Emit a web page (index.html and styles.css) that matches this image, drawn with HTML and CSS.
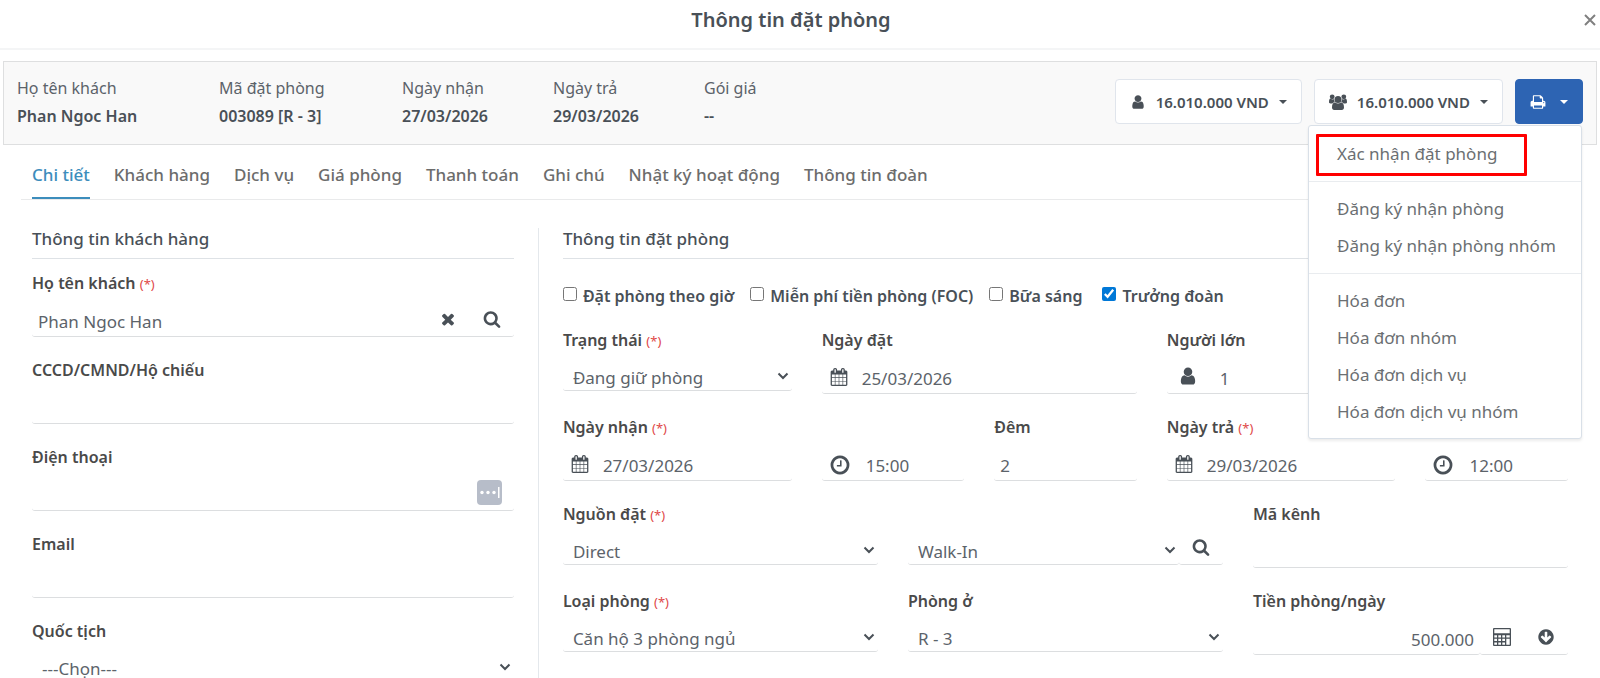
FILE: index.html
```html
<!DOCTYPE html>
<html lang="vi">
<head>
<meta charset="utf-8">
<title>Thông tin đặt phòng</title>
<link rel="stylesheet" href="styles.css">
</head>
<body>
<svg class="sprite" aria-hidden="true">
  <symbol id="i-search" viewBox="0 0 1792 1792"><path d="M1216 832q0-185-131.500-316.500t-316.500-131.500-316.500 131.500-131.500 316.500 131.500 316.500 316.500 131.500 316.500-131.500 131.500-316.500zm512 832q0 52-38 90t-90 38q-54 0-90-38l-343-342q-179 124-399 124-143 0-273.500-55.500t-225-150-150-225-55.500-273.500 55.500-273.500 150-225 225-150 273.500-55.500 273.500 55.500 225 150 150 225 55.500 273.500q0 220-124 399l343 343q37 37 37 90z"/></symbol>
  <symbol id="i-user" viewBox="0 0 1792 1792"><path d="M1536 1399q0 109-62.500 187t-150.500 78h-854q-88 0-150.500-78t-62.500-187q0-85 8.500-160.500t31.500-152 58.500-131 94-89 134.500-34.500q131 128 313 128t313-128q76 0 134.500 34.500t94 89 58.500 131 31.500 152 8.500 160.500zm-256-887q0 159-112.500 271.500t-271.500 112.500-271.500-112.500-112.500-271.500 112.500-271.500 271.500-112.500 271.500 112.500 112.500 271.500z"/></symbol>
  <symbol id="i-times" viewBox="0 0 1792 1792"><path d="M1490 1322q0 40-28 68l-136 136q-28 28-68 28t-68-28l-294-294-294 294q-28 28-68 28t-68-28l-136-136q-28-28-28-68t28-68l294-294-294-294q-28-28-28-68t28-68l136-136q28-28 68-28t68 28l294 294 294-294q28-28 68-28t68 28l136 136q28 28 28 68t-28 68l-294 294 294 294q28 28 28 68z"/></symbol>
  <symbol id="i-clock" viewBox="0 0 1792 1792"><path d="M1024 544v448q0 14-9 23t-23 9h-320q-14 0-23-9t-9-23v-64q0-14 9-23t23-9h224v-352q0-14 9-23t23-9h64q14 0 23 9t9 23zm416 352q0-148-73-273t-198-198-273-73-273 73-198 198-73 273 73 273 198 198 273 73 273-73 198-198 73-273zm224 0q0 209-103 385.500t-279.500 279.500-385.500 103-385.500-103-279.500-279.500-103-385.500 103-385.500 279.500-279.500 385.500-103 385.500 103 279.500 279.500 103 385.500z"/></symbol>
  <symbol id="i-calendar" viewBox="0 0 1792 1792"><path d="M192 1664h288v-288h-288v288zm352 0h320v-288h-320v288zm-352-352h288v-320h-288v320zm352 0h320v-320h-320v320zm-352-384h288v-288h-288v288zm736 736h320v-288h-320v288zm-384-736h320v-288h-320v288zm768 736h288v-288h-288v288zm-384-352h320v-320h-320v320zm-352-864v-288q0-13-9.500-22.500t-22.500-9.500h-64q-13 0-22.500 9.500t-9.500 22.500v288q0 13 9.500 22.500t22.500 9.500h64q13 0 22.500-9.500t9.500-22.500zm736 864h288v-320h-288v320zm-384-384h320v-288h-320v288zm384 0h288v-288h-288v288zm32-480v-288q0-13-9.500-22.500t-22.500-9.500h-64q-13 0-22.500 9.500t-9.500 22.500v288q0 13 9.500 22.500t22.500 9.500h64q13 0 22.500-9.500t9.500-22.500zm384-64v1280q0 52-38 90t-90 38h-1408q-52 0-90-38t-38-90v-1280q0-52 38-90t90-38h128v-96q0-66 47-113t113-47h64q66 0 113 47t47 113v96h384v-96q0-66 47-113t113-47h64q66 0 113 47t47 113v96h128q52 0 90 38t38 90z"/></symbol>
  <symbol id="i-down" viewBox="0 0 1792 1792"><path d="M1412 897q0-27-18-45l-91-91q-18-18-45-18t-45 18l-189 189v-502q0-26-19-45t-45-19h-128q-26 0-45 19t-19 45v502l-189-189q-19-19-45-19t-45 19l-91 91q-18 18-18 45t18 45l362 362 91 91q18 18 45 18t45-18l91-91 362-362q18-18 18-45zm252-1q0 209-103 385.500t-279.500 279.500-385.500 103-385.500-103-279.500-279.500-103-385.500 103-385.500 279.500-279.500 385.500-103 385.500 103 279.500 279.500 103 385.500z"/></symbol>
  <symbol id="i-print" viewBox="0 0 1792 1792"><path d="M448 1536h896v-256h-896v256zm0-640h896v-384h-160q-40 0-68-28t-28-68v-160h-640v640zm1152 64q0-26-19-45t-45-19-45 19-19 45 19 45 45 19 45-19 19-45zm128 0v416q0 13-9.500 22.500t-22.500 9.500h-224v160q0 40-28 68t-68 28h-960q-40 0-68-28t-28-68v-160h-224q-13 0-22.500-9.500t-9.500-22.500v-416q0-79 56.500-135.500t135.500-56.500h64v-544q0-40 28-68t68-28h672q40 0 88 20t76 48l152 152q28 28 48 76t20 88v256h64q79 0 135.500 56.500t56.500 135.500z"/></symbol>
  <symbol id="i-users" viewBox="0 0 18 16"><circle cx="9" cy="5.400" r="3.500"/><circle cx="3.200" cy="2.800" r="2.400"/><circle cx="14.800" cy="2.800" r="2.400"/><path d="M3 13.500c0-3.600 1-5 3.200-5 1.600 1.400 4 1.400 5.600 0 2.200 0 3.200 1.400 3.200 5 0 1.500-.9 2.500-2.200 2.500H5.200C3.900 16 3 15 3 13.500zM0 8.200c0-2.400.5-3.600 1.600-3.600 1 .9 2.100 1 3.300.7.100 1 .4 1.900.9 2.700-1 .1-1.900.6-2.500 1.400H1.500C.6 9.400 0 9 0 8.200zM18 8.200c0-2.400-.5-3.600-1.600-3.600-1 .9-2.100 1-3.300.7-.1 1-.4 1.900-.9 2.700 1 .1 1.900.6 2.500 1.400h1.800c.9 0 1.500-.4 1.500-1.200z"/></symbol>
  <symbol id="i-calc" viewBox="0 0 18 18"><path fill-rule="evenodd" d="M1 0h16a1 1 0 0 1 1 1v16a1 1 0 0 1-1 1H1a1 1 0 0 1-1-1V1a1 1 0 0 1 1-1zm.300 1.300v4h15.400v-4zM1.300 7.200v2.200h2.700V7.200zm4 0v2.200H8V7.200zm4 0v2.200H12V7.200zm4 0v2.200h3.400V7.200zm-12 3.600v2.200h2.700v-2.200zm4 0v2.200H8v-2.200zm4 0v2.200H12v-2.200zm-8 3.600v2.300h2.700v-2.300zm4 0v2.300H8v-2.300zm4 0v2.300H12v-2.300zm4-3.600v5.900h3.400v-5.900z"/></symbol>
  <symbol id="i-chev" viewBox="0 0 12 8"><path d="M1.500 1.500 6 6l4.500-4.500" fill="none" stroke="currentColor" stroke-width="2"/></symbol>
  <symbol id="i-caret" viewBox="0 0 8 4"><path d="M0 0h8L4 4z"/></symbol>
  <symbol id="i-close" viewBox="0 0 12 12"><path d="M1 1l10 10M11 1L1 11" fill="none" stroke="currentColor" stroke-width="2"/></symbol>
</svg>

<header class="modal-head">
  <h1 class="modal-title">Thông tin đặt phòng</h1>
  <button class="close" type="button" aria-label="Đóng"><svg class="ic-12"><use href="#i-close"/></svg></button>
</header>

<section class="summary">
  <dl class="facts">
    <div class="fact"><dt>Họ tên khách</dt><dd>Phan Ngoc Han</dd></div>
    <div class="fact"><dt>Mã đặt phòng</dt><dd>003089 [R - 3]</dd></div>
    <div class="fact"><dt>Ngày nhận</dt><dd>27/03/2026</dd></div>
    <div class="fact"><dt>Ngày trả</dt><dd>29/03/2026</dd></div>
    <div class="fact"><dt>Gói giá</dt><dd>--</dd></div>
  </dl>
  <div class="actions">
    <button class="btn" type="button"><svg class="ic-16"><use href="#i-user"/></svg><span>16.010.000 VND</span><svg class="caret"><use href="#i-caret"/></svg></button>
    <button class="btn" type="button"><svg class="ic-18"><use href="#i-users"/></svg><span>16.010.000 VND</span><svg class="caret"><use href="#i-caret"/></svg></button>
    <div class="print">
      <button class="btn btn-primary" type="button" aria-label="In" aria-expanded="true"><svg class="ic-16"><use href="#i-print"/></svg><svg class="caret"><use href="#i-caret"/></svg></button>
      <div class="menu">
        <a class="item marked" href="#">Xác nhận đặt phòng</a>
        <hr class="sep">
        <a class="item" href="#">Đăng ký nhận phòng</a>
        <a class="item" href="#">Đăng ký nhận phòng nhóm</a>
        <hr class="sep">
        <a class="item" href="#">Hóa đơn</a>
        <a class="item" href="#">Hóa đơn nhóm</a>
        <a class="item" href="#">Hóa đơn dịch vụ</a>
        <a class="item" href="#">Hóa đơn dịch vụ nhóm</a>
      </div>
    </div>
  </div>
</section>

<nav class="tabs">
  <a class="tab active" href="#">Chi tiết</a>
  <a class="tab" href="#">Khách hàng</a>
  <a class="tab" href="#">Dịch vụ</a>
  <a class="tab" href="#">Giá phòng</a>
  <a class="tab" href="#">Thanh toán</a>
  <a class="tab" href="#">Ghi chú</a>
  <a class="tab" href="#">Nhật ký hoạt động</a>
  <a class="tab" href="#">Thông tin đoàn</a>
</nav>

<main class="panes">
  <section class="pane guest">
    <h2 class="pane-title">Thông tin khách hàng</h2>
    <div class="stack">
      <div class="field">
        <label class="label" for="name">Họ tên khách <span class="req">(*)</span></label>
        <div class="control">
          <input class="input" id="name" type="text" value="Phan Ngoc Han">
          <button class="icon-btn" type="button" aria-label="Xóa"><svg class="ic-18"><use href="#i-times"/></svg></button>
          <button class="icon-btn" type="button" aria-label="Tìm"><svg class="ic-18"><use href="#i-search"/></svg></button>
        </div>
      </div>
      <div class="field">
        <label class="label" for="idno">CCCD/CMND/Hộ chiếu</label>
        <div class="control"><input class="input" id="idno" type="text"></div>
      </div>
      <div class="field">
        <label class="label" for="phone">Điện thoại</label>
        <div class="control">
          <input class="input" id="phone" type="tel">
          <svg class="filler" viewBox="0 0 25 25" aria-hidden="true"><rect width="25" height="25" rx="4" fill="#b7bdc9"/><g fill="#fff"><circle cx="5" cy="12.500" r="1.700"/><circle cx="11" cy="12.500" r="1.700"/><circle cx="17" cy="12.500" r="1.700"/><rect x="21" y="7" width="1.500" height="11"/></g></svg>
        </div>
      </div>
      <div class="field">
        <label class="label" for="email">Email</label>
        <div class="control"><input class="input" id="email" type="email"></div>
      </div>
      <div class="field">
        <label class="label" for="nation">Quốc tịch</label>
        <div class="control short"><select class="select" id="nation"><option>---Chọn---</option></select><svg class="chev"><use href="#i-chev"/></svg></div>
      </div>
    </div>
  </section>

  <section class="pane booking">
    <h2 class="pane-title">Thông tin đặt phòng</h2>
    <div class="checks">
      <label class="check"><input class="box" type="checkbox">Đặt phòng theo giờ</label>
      <label class="check"><input class="box" type="checkbox">Miễn phí tiền phòng (FOC)</label>
      <label class="check"><input class="box" type="checkbox">Bữa sáng</label>
      <label class="check last"><input class="box" type="checkbox" checked>Trưởng đoàn</label>
    </div>
    <div class="grid">
      <div class="field c3">
        <label class="label" for="status">Trạng thái <span class="req">(*)</span></label>
        <div class="control short"><select class="select" id="status"><option>Đang giữ phòng</option></select><svg class="chev"><use href="#i-chev"/></svg></div>
      </div>
      <div class="field c4">
        <label class="label" for="booked">Ngày đặt</label>
        <div class="control"><svg class="lead"><use href="#i-calendar"/></svg><input class="input" id="booked" type="text" value="25/03/2026"></div>
      </div>
      <div class="field c5">
        <label class="label" for="adults">Người lớn</label>
        <div class="control"><svg class="lead wide"><use href="#i-user"/></svg><input class="input" id="adults" type="text" value="1"></div>
      </div>

      <div class="field c3">
        <label class="label" for="in">Ngày nhận <span class="req">(*)</span></label>
        <div class="control"><svg class="lead"><use href="#i-calendar"/></svg><input class="input" id="in" type="text" value="27/03/2026"></div>
      </div>
      <div class="field c2 bare">
        <div class="control"><svg class="lead clock"><use href="#i-clock"/></svg><input class="input" type="text" value="15:00" aria-label="Giờ nhận"></div>
      </div>
      <div class="field c2">
        <label class="label" for="nights">Đêm</label>
        <div class="control"><input class="input" id="nights" type="text" value="2"></div>
      </div>
      <div class="field c3">
        <label class="label" for="out">Ngày trả <span class="req">(*)</span></label>
        <div class="control"><svg class="lead"><use href="#i-calendar"/></svg><input class="input" id="out" type="text" value="29/03/2026"></div>
      </div>
      <div class="field c2 bare">
        <div class="control"><svg class="lead clock"><use href="#i-clock"/></svg><input class="input" type="text" value="12:00" aria-label="Giờ trả"></div>
      </div>

      <div class="field c4">
        <label class="label" for="source">Nguồn đặt <span class="req">(*)</span></label>
        <div class="control short"><select class="select" id="source"><option>Direct</option></select><svg class="chev"><use href="#i-chev"/></svg></div>
      </div>
      <div class="field c4 bare">
        <div class="pair">
          <div class="control short"><select class="select" aria-label="Kênh"><option>Walk-In</option></select><svg class="chev"><use href="#i-chev"/></svg></div>
          <div class="control short tail"><button class="icon-btn" type="button" aria-label="Tìm kênh"><svg class="ic-18"><use href="#i-search"/></svg></button></div>
        </div>
      </div>
      <div class="field c4">
        <label class="label" for="channel">Mã kênh</label>
        <div class="control"><input class="input" id="channel" type="text"></div>
      </div>

      <div class="field c4">
        <label class="label" for="type">Loại phòng <span class="req">(*)</span></label>
        <div class="control short"><select class="select" id="type"><option>Căn hộ 3 phòng ngủ</option></select><svg class="chev"><use href="#i-chev"/></svg></div>
      </div>
      <div class="field c4">
        <label class="label" for="room">Phòng ở</label>
        <div class="control short"><select class="select" id="room"><option>R - 3</option></select><svg class="chev"><use href="#i-chev"/></svg></div>
      </div>
      <div class="field c4">
        <label class="label" for="rate">Tiền phòng/ngày</label>
        <div class="pair">
          <div class="control"><input class="input money" id="rate" type="text" value="500.000"></div>
          <div class="control tail">
            <button class="icon-btn" type="button" aria-label="Tính giá"><svg class="ic-18"><use href="#i-calc"/></svg></button>
            <button class="icon-btn" type="button" aria-label="Áp dụng"><svg class="ic-18"><use href="#i-down"/></svg></button>
          </div>
        </div>
      </div>
    </div>
  </section>
</main>
</body>
</html>
```
FILE: styles.css
```css
* { box-sizing: border-box; }

html { overflow: hidden; }

body {
  margin: 0;
  background: #fff;
  color: #495057;
  font: 17px/26px "Noto Sans", "Open Sans", sans-serif;
}

svg { display: block; flex: none; fill: currentColor; }

.sprite { position: absolute; width: 0; height: 0; }

button, input, select { font: inherit; color: inherit; }

button { cursor: pointer; }

a { color: inherit; text-decoration: none; }

.ic-12 { width: 12px; height: 12px; }
.ic-16 { width: 16px; height: 16px; }
.ic-18 { width: 18px; height: 18px; }

/* Header */
.modal-head {
  display: grid;
  grid-template-columns: 1fr 14px;
  align-items: center;
  padding: 4px 4px 12px 0;
  border-bottom: 2px solid #f4f5f6;
}

.modal-title {
  margin: 0;
  font-size: 20px;
  line-height: 32px;
  font-weight: 600;
  text-align: center;
}

.close {
  justify-self: end;
  padding: 0;
  border: 0;
  background: none;
  color: #808080;
}

/* Summary bar */
.summary {
  display: flex;
  justify-content: space-between;
  align-items: flex-start;
  margin: 11px 3px 0;
  padding: 12px 13px 14px;
  border: 1px solid #dedfe0;
  background: #f9f9f9;
}

.facts {
  display: grid;
  grid-template-columns: 202px 183px 151px 151px auto;
  margin: 0;
  font-size: 16px;
}

.fact dt, .fact dd { margin: 0; line-height: 28px; }
.fact dt { color: #5c636a; }
.fact dd { font-weight: 600; }

.actions {
  display: flex;
  gap: 12px;
  padding-top: 5px;
}

.btn {
  display: flex;
  align-items: center;
  gap: 10px;
  height: 45px;
  padding: 0 14px;
  border: 1px solid #e0e5ec;
  border-radius: 4px;
  background: #fff;
  font-size: 15px;
  font-weight: 600;
}

.caret { width: 8px; height: 4px; }

.btn-primary {
  gap: 14px;
  border-color: #2d64b3;
  background: #2d64b3;
  color: #fff;
}

.print { position: relative; }

.menu {
  position: absolute;
  top: 46px;
  right: 1px;
  z-index: 2;
  width: 274px;
  padding: 9px 0 8px;
  border: 1px solid #d9e0e8;
  border-radius: 3px;
  background: #fff;
  box-shadow: 0 2px 3px rgba(0, 0, 0, .08);
}

.item {
  position: relative;
  display: block;
  padding: 0 28px;
  line-height: 37px;
  color: #6b6f72;
  white-space: nowrap;
}

.marked::after {
  content: "";
  position: absolute;
  inset: -1px 54px -4px 7px;
  border: 3px solid #f00;
  border-radius: 1px;
}

.sep {
  margin: 9px 0 8px;
  border: 0;
  border-top: 1px solid #e9ecef;
}

/* Tabs */
.tabs {
  display: flex;
  gap: 24px;
  margin: 15px 21px 0;
  padding: 0 11px;
  border-bottom: 1px solid #e9eaeb;
  color: #6c6c6c;
  font-weight: 500;
}

.tab {
  padding: 2px 0 9px;
  border-bottom: 2px solid transparent;
}

.active {
  border-color: #3c8dbc;
  color: #3c8dbc;
}

/* Form panes */
.panes {
  display: flex;
  margin-top: 28px;
  padding: 0 32px;
}

.pane { flex: 1; min-width: 0; }

.guest {
  flex: 0 0 33%;
  padding-right: 24px;
  border-right: 1px solid #e4e8ec;
}

.booking { padding-left: 24px; }

.pane-title {
  margin: 0;
  padding-bottom: 8px;
  border-bottom: 1px solid #dee2e6;
  font-size: 17px;
  line-height: 22px;
  font-weight: 500;
}

.stack {
  display: grid;
  gap: 20px;
  padding-top: 11px;
}

.checks {
  display: flex;
  gap: 16px;
  padding: 24px 0 18px;
  font-size: 16px;
  font-weight: 600;
}

.check { display: flex; align-items: center; }

.last { margin-left: 4px; }

.box {
  width: 14px;
  height: 14px;
  margin: 0 6px 4px 0;
  accent-color: #0078d7;
}

.grid {
  display: grid;
  grid-template-columns: repeat(12, minmax(0, 1fr));
  gap: 20px 30px;
}

.c2 { grid-column: span 2; }
.c3 { grid-column: span 3; }
.c4 { grid-column: span 4; }
.c5 { grid-column: span 5; }

.bare { padding-top: 26px; }

.label {
  display: block;
  height: 26px;
  color: #4a4a4a;
  font-size: 16px;
  font-weight: 600;
}

.req {
  color: #e04848;
  font-size: 13px;
  font-weight: 400;
}

.control {
  position: relative;
  display: flex;
  height: 41px;
  border-bottom: 1px solid #dcdee0;
  border-radius: 3px;
  color: #495057;
}

.short { height: 38px; }

.input, .select {
  flex: 1;
  width: 100%;
  min-width: 0;
  padding: 12px 6px 0;
  border: 0;
  outline: 0;
  background: transparent;
  color: #5c636a;
  line-height: 26px;
}

.select { padding: 12px 10px 0; appearance: none; }

.money { text-align: right; }

.chev {
  position: absolute;
  right: 3px;
  top: 19px;
  width: 12px;
  height: 8px;
}

.lead {
  width: 18px;
  height: 18px;
  margin: 15px 8px 0;
}

.wide { width: 20px; height: 20px; margin: 13px 16px 0 11px; }
.clock { width: 22px; height: 22px; margin: 14px 9px 0 7px; }

.icon-btn {
  display: grid;
  place-items: center;
  width: 44px;
  padding: 6px 0 0;
  border: 0;
  background: none;
}

.short .icon-btn { padding: 2px 0 0; }

.filler {
  width: 25px;
  height: 25px;
  margin: 10px 12px 0 0;
}

.pair { display: flex; }
.pair .control { flex: 1; }
.pair .tail { flex: none; }
```
